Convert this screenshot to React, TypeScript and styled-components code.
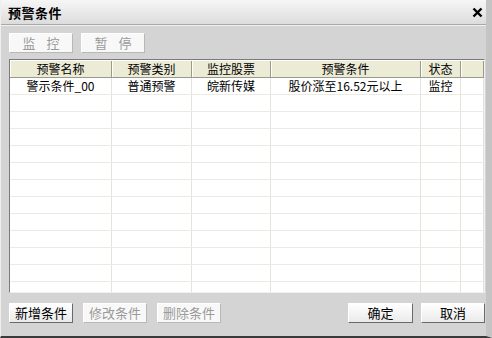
import React from 'react';
import styled, { createGlobalStyle } from 'styled-components';

const Global = createGlobalStyle`
  html, body { margin: 0; padding: 0; background: #d4d4d4; }
  body { font-family: "Liberation Sans", "Noto Sans CJK SC", sans-serif; font-size: 12px; color: #000; }
`;

const Window = styled.div`
  width: 492px;
  height: 338px;
  box-sizing: border-box;
  background: #d4d4d4;
  border-left: 1px solid #eeeeee;
  border-right: 6px solid #c4c4c4;
  border-bottom: 2px solid #3a3a3a;
  display: flex;
  flex-direction: column;
`;

const TitleBar = styled.div`
  height: 24px;
  flex: none;
  display: flex;
  align-items: center;
  justify-content: space-between;
  padding: 0 0 0 7px;
  background: linear-gradient(#f6f6f6, #dcdcdc);
  border-bottom: 1px solid #a8a8a8;
  box-shadow: 0 1px 0 #f0f0f0;
`;

const Title = styled.div`
  font-family: "Noto Sans CJK SC", sans-serif;
  font-weight: bold;
  font-size: 13px;
  letter-spacing: 0.5px;
`;

const Close = styled.div`
  width: 18px;
  height: 18px;
  display: flex;
  align-items: center;
  justify-content: center;
`;

const Body = styled.div`
  flex: 1;
  display: flex;
  flex-direction: column;
  padding: 8px 0 0 8px;
`;

const Toolbar = styled.div`
  display: flex;
  gap: 8px;
  height: 20px;
`;

const Button = styled.button<{ $disabled?: boolean; $wide?: number; $spaced?: boolean }>`
  width: ${p => p.$wide ?? 64}px;
  height: 20px;
  box-sizing: border-box;
  padding: 0;
  font-family: "Noto Sans CJK SC", sans-serif;
  font-size: 13px;
  letter-spacing: ${p => (p.$spaced ? '11px' : '0')};
  text-indent: ${p => (p.$spaced ? '11px' : '0')};
  color: ${p => (p.$disabled ? '#9a9a9a' : '#000')};
  background: ${p => (p.$disabled ? '#f8f8f8' : 'linear-gradient(#ffffff, #eaeaea)')};
  border: 1px solid;
  border-color: ${p => (p.$disabled ? '#ffffff #b8b8b8 #b8b8b8 #ffffff' : '#ffffff #6a6a6a #6a6a6a #ffffff')};
  line-height: 18px;
`;

const Table = styled.div`
  margin-top: 6px;
  width: 476px;
  height: 234px;
  box-sizing: border-box;
  border: 1px solid #7a7a7a;
  border-right-color: #f0f0f0;
  border-bottom-color: #f0f0f0;
  background: #fff;
  overflow: hidden;
`;

const cols = [102, 80, 79, 150, 40, 23];

const Row = styled.div<{ $head?: boolean }>`
  display: grid;
  grid-template-columns: ${cols.map(c => c + 'px').join(' ')};
  height: ${p => (p.$head ? 18 : 17)}px;
  box-sizing: border-box;
  background: ${p => (p.$head ? '#ecebd6' : '#fff')};
  border-bottom: 1px solid ${p => (p.$head ? '#9a9a8a' : '#ebebe4')};
  border-top: ${p => (p.$head ? '1px solid #ffffff' : 'none')};
`;

const Cell = styled.div<{ $head?: boolean }>`
  box-sizing: border-box;
  font-family: "Noto Sans CJK SC", sans-serif;
  font-size: 12px;
  line-height: 16px;
  text-align: center;
  white-space: nowrap;
  border-right: 1px solid ${p => (p.$head ? '#9a9a8a' : '#e4e4dc')};
  box-shadow: ${p => (p.$head ? 'inset 1px 0 0 #ffffff' : 'none')};
`;

const Footer = styled.div`
  display: flex;
  align-items: center;
  height: 20px;
  margin-top: 10px;
  width: 476px;
`;

const Group = styled.div<{ $gap: number }>`
  display: flex;
  gap: ${p => p.$gap}px;
`;

const Spacer = styled.div`
  flex: 1;
`;

const headers = ['预警名称', '预警类别', '监控股票', '预警条件', '状态', ''];
const data = [['警示条件_00', '普通预警', '皖新传媒', '股价涨至16.52元以上', '监控', '']];
const emptyRows = 13;

export default function App() {
  return (
    <>
      <Global />
      <Window>
        <TitleBar>
          <Title>预警条件</Title>
          <Close>
            <svg width="11" height="11" viewBox="0 0 11 11">
              <path d="M1.5 1.5 L9.5 9.5 M9.5 1.5 L1.5 9.5" stroke="#000" strokeWidth="2.4" />
            </svg>
          </Close>
        </TitleBar>
        <Body>
          <Toolbar>
            <Button $disabled $spaced>监控</Button>
            <Button $disabled $spaced>暂停</Button>
          </Toolbar>
          <Table>
            <Row $head>
              {headers.map((h, i) => (
                <Cell $head key={i}>{h}</Cell>
              ))}
            </Row>
            {data.map((r, ri) => (
              <Row key={ri}>
                {r.map((c, ci) => (
                  <Cell key={ci}>{c}</Cell>
                ))}
              </Row>
            ))}
            {Array.from({ length: emptyRows }).map((_, ri) => (
              <Row key={'e' + ri}>
                {cols.map((_, ci) => (
                  <Cell key={ci} />
                ))}
              </Row>
            ))}
          </Table>
          <Footer>
            <Group $gap={10}>
              <Button>新增条件</Button>
              <Button $disabled>修改条件</Button>
              <Button $disabled>删除条件</Button>
            </Group>
            <Spacer />
            <Group $gap={8}>
              <Button $wide={65}>确定</Button>
              <Button>取消</Button>
            </Group>
          </Footer>
        </Body>
      </Window>
    </>
  );
}
